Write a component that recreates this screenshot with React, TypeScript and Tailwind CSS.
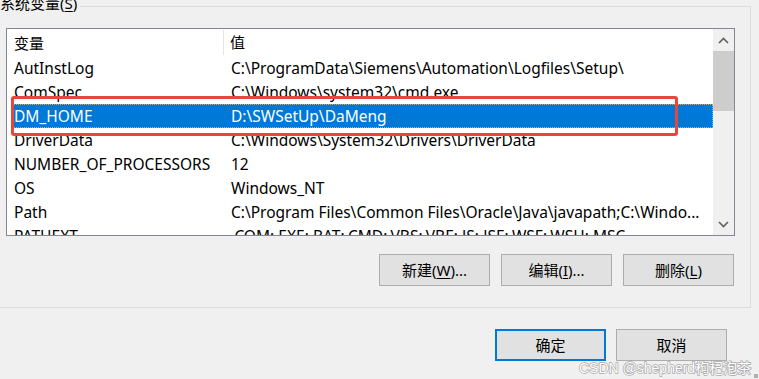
import React from 'react';

type EnvVar = { name: string; value: string };

const vars: EnvVar[] = [
  { name: 'AutInstLog', value: 'C:\\ProgramData\\Siemens\\Automation\\Logfiles\\Setup\\' },
  { name: 'ComSpec', value: 'C:\\Windows\\system32\\cmd.exe' },
  { name: 'DM_HOME', value: 'D:\\SWSetUp\\DaMeng' },
  { name: 'DriverData', value: 'C:\\Windows\\System32\\Drivers\\DriverData' },
  { name: 'NUMBER_OF_PROCESSORS', value: '12' },
  { name: 'OS', value: 'Windows_NT' },
  { name: 'Path', value: 'C:\\Program Files\\Common Files\\Oracle\\Java\\javapath;C:\\Windo...' },
  { name: 'PATHEXT', value: '.COM;.EXE;.BAT;.CMD;.VBS;.VBE;.JS;.JSE;.WSF;.WSH;.MSC' },
];

const selected = 'DM_HOME';

const Chevron = ({ up }: { up?: boolean }) => (
  <svg width="11" height="7" viewBox="0 0 11 7">
    <path
      d={up ? 'M1 6 L5.5 1.5 L10 6' : 'M1 1 L5.5 5.5 L10 1'}
      fill="none"
      stroke="#606060"
      strokeWidth="1.6"
    />
  </svg>
);

const WinButton = ({ label, mnemonic, suffix, focused }: { label: string; mnemonic?: string; suffix?: string; focused?: boolean }) => (
  <div
    className={
      focused
        ? 'w-[111px] h-[32px] flex items-center justify-center bg-[#e1e1e1] border-2 border-[#0078d7] text-[15px] text-black'
        : 'w-[111px] h-[32px] flex items-center justify-center bg-[#e1e1e1] border border-[#adadad] text-[15px] text-black'
    }
  >
    {label}
    {mnemonic && (
      <>
        (<span className="underline underline-offset-2">{mnemonic}</span>)
      </>
    )}
    {suffix}
  </div>
);

const App = () => {
  return (
    <div
      className="relative w-[759px] h-[379px] overflow-hidden bg-[#f0f0f0] text-black"
      style={{ fontFamily: '"Noto Sans", "Noto Sans CJK SC", sans-serif' }}
    >
      {/* group box */}
      <div className="relative ml-[-4px] mt-[6px] w-[755px] h-[302px] border border-[#dcdcdc]">
        <div className="absolute left-[3px] top-[-14px] pr-[3px] bg-[#f0f0f0] text-[15px] leading-[20px]">
          系统变量(<span className="underline underline-offset-2">S</span>)
        </div>

        {/* list view */}
        <div className="ml-[9px] mt-[21px] w-[729px] h-[208px] border border-[#828790] bg-white flex overflow-hidden">
          <div className="w-[706px] h-full overflow-hidden text-[15.5px]">
            <div className="flex h-[27px] items-center">
              <div className="w-[217px] pl-[7px] h-[25px] leading-[27px] border-r border-[#e5e5e5] text-[15px]">变量</div>
              <div className="pl-[6px] leading-[27px] text-[15px]">值</div>
            </div>
            {vars.map((v) => {
              const sel = v.name === selected;
              return (
                <div
                  key={v.name}
                  className={
                    sel
                      ? 'flex h-[24px] ml-[4px] pt-[1px] items-center bg-[#0078d7] text-white border border-dotted border-[#e8a24a]'
                      : 'flex h-[24px] ml-[4px] pt-[1px] items-center'
                  }
                >
                  <div className={sel ? 'w-[219px] pl-[2px] whitespace-nowrap' : 'w-[220px] pl-[3px] whitespace-nowrap'}>{v.name}</div>
                  <div className="whitespace-nowrap">{v.value}</div>
                </div>
              );
            })}
          </div>
          {/* scrollbar */}
          <div className="w-[21px] h-full bg-[#f0f0f0] flex flex-col">
            <div className="h-[22px] flex items-center justify-center">
              <Chevron up />
            </div>
            <div className="h-[60px] bg-[#cdcdcd]" />
            <div className="flex-1" />
            <div className="h-[22px] flex items-center justify-center">
              <Chevron />
            </div>
          </div>
        </div>

        <div className="flex justify-end gap-[11px] pr-[16px] mt-[18px]">
          <WinButton label="新建" mnemonic="W" suffix="..." />
          <WinButton label="编辑" mnemonic="I" suffix="..." />
          <WinButton label="删除" mnemonic="L" />
        </div>
      </div>

      <div className="flex justify-end gap-[10px] pr-[32px] mt-[21px]">
        <WinButton label="确定" focused />
        <WinButton label="取消" />
      </div>

      {/* annotation */}
      <div className="absolute left-[11px] top-[96px] w-[667px] h-[40px] border-[3px] border-[#e8463a] rounded-[3px]" />

      {/* watermark */}
      <div
        className="absolute left-[579px] top-[358px] text-[14px] leading-[20px] text-white [-webkit-text-stroke:1.4px_#a8a8a8] [paint-order:stroke_fill] whitespace-nowrap"
        style={{ fontFamily: '"Liberation Sans", "Noto Sans CJK SC", sans-serif' }}
      >
        CSDN @shepherd枸杞泡茶
      </div>
      <div className="absolute right-[1px] bottom-[1px] w-[4px] h-[4px] bg-[#b0b0b0]" />
    </div>
  );
};

export default App;
